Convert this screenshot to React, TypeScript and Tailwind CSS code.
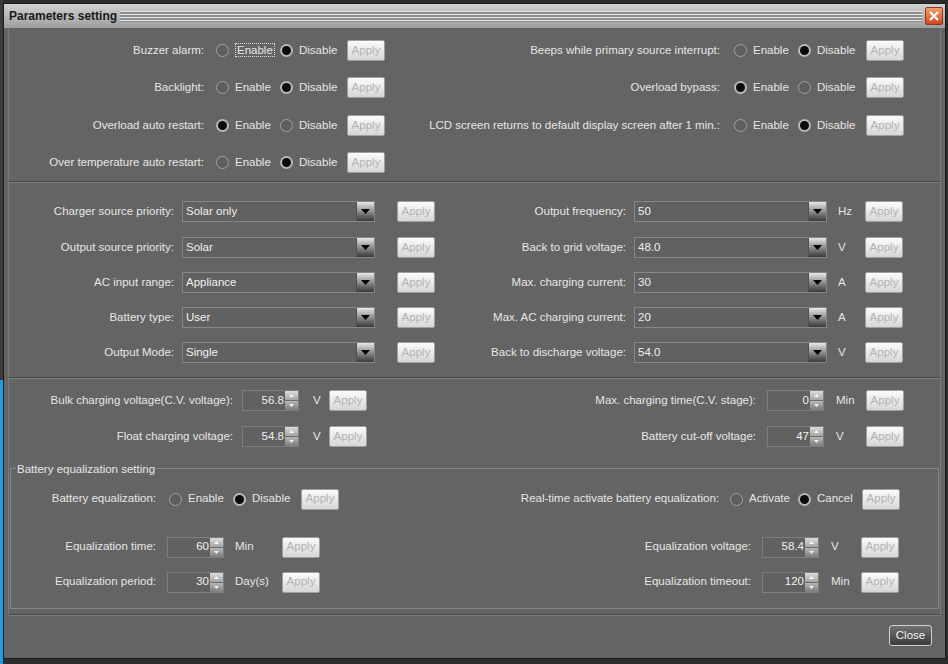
import React from "react";

const font = { fontFamily: '"Liberation Sans", Arial, sans-serif' };

// small widgets that mimic the Swing dark look
const Radio = ({ on }: { on?: boolean }) => (
  <span
    className={`flex h-[13px] w-[13px] shrink-0 items-center justify-center rounded-full ${
      on ? "bg-[#b8b8b8]" : "border border-[#a2a2a2] bg-[#5e5e5e]"
    }`}
  >
    {on && <span className="h-[9px] w-[9px] rounded-full bg-[#0a0a0a]" />}
  </span>
);

const Apply = ({ ml = "" }: { ml?: string }) => (
  <span
    className={`flex h-[21px] w-[38px] shrink-0 items-center justify-center rounded-[2px] border border-[#a0a0a0] bg-gradient-to-b from-[#fbfbfb] to-[#d6d6d6] text-[11.5px] text-[#b3b3b3] ${ml}`}
  >
    Apply
  </span>
);

const Select = ({ value }: { value: string }) => (
  <div className="flex h-[21px] w-[193px] shrink-0 items-center border border-[#878787] bg-[#616161]">
    <span className="flex-1 pl-[3px] text-[#f0f0f0]">{value}</span>
    <span className="flex h-full w-[18px] items-center justify-center border-l border-[#505050] bg-gradient-to-b from-[#e8e8e8] via-[#8e8e8e] to-[#3a3a3a]">
      <svg width="9" height="5" viewBox="0 0 9 5">
        <path d="M0 0h9L4.5 5z" fill="#050505" />
      </svg>
    </span>
  </div>
);

const Spinner = ({ value }: { value: string }) => (
  <div className="flex h-[21px] w-[57px] shrink-0 border border-[#7e7e7e] bg-[#616161]">
    <span className="flex flex-1 items-center justify-end pr-[1px] text-[#f0f0f0]">{value}</span>
    <span className="flex w-[13px] flex-col">
      <span className="flex flex-1 items-center justify-center bg-gradient-to-b from-[#dcdcdc] to-[#a4a4a4]">
        <svg width="5" height="3" viewBox="0 0 5 3">
          <path d="M0 3h5L2.5 0z" fill="#f6f6f6" />
        </svg>
      </span>
      <span className="flex flex-1 items-center justify-center border-t border-[#6c6c6c] bg-gradient-to-b from-[#b8b8b8] to-[#7c7c7c]">
        <svg width="5" height="3" viewBox="0 0 5 3">
          <path d="M0 0h5L2.5 3z" fill="#f0f0f0" />
        </svg>
      </span>
    </span>
  </div>
);

// radio pair: Enable / Disable
const Pair = ({
  on,
  a = "Enable",
  b = "Disable",
  first = "ml-[12px]",
  aw = "w-[37px]",
  bw = "w-[41px]",
  gap = "ml-[8px]",
  applyMl = "ml-[7px]",
  focus,
}: {
  on: 0 | 1;
  a?: string;
  b?: string;
  first?: string;
  aw?: string;
  bw?: string;
  gap?: string;
  applyMl?: string;
  focus?: boolean;
}) => (
  <>
    <span className={first}>
      <Radio on={on === 0} />
    </span>
    <span className={`ml-[6px] ${aw} shrink-0`}>
      <span className={focus ? "border border-dotted border-[#e0e0e0] px-[1px]" : ""}>{a}</span>
    </span>
    <span className={gap}>
      <Radio on={on === 1} />
    </span>
    <span className={`ml-[6px] ${bw} shrink-0`}>{b}</span>
    <Apply ml={applyMl} />
  </>
);

const Etched = "border-b border-b-[#4a4a4a] shadow-[0_1px_0_#7c7c7c]";

export default function App() {
  return (
    <div className="flex h-[664px] w-[948px] overflow-hidden bg-[#2c2c2c] text-[11.5px] text-[#e6e6e6]" style={font}>
      {/* bits of the application behind the dialog */}
      <div className="flex w-[3px] flex-col">
        <div className="h-[380px] bg-[#3c3c3c]" />
        <div className="flex-1 bg-[#1c9de4]" />
      </div>

      <div className="mt-[3px] flex h-[656px] w-[943px] flex-col border border-[#1a1a1a] bg-[#646464]">
        {/* Title bar */}
        <div className="flex h-[24px] items-center bg-gradient-to-b from-[#d2d2d2] to-[#9e9e9e] pl-[5px] pr-[2px]">
          <span className="text-[12px] font-bold text-[#1a1a1a]">Parameters setting</span>
          <div className="ml-[3px] h-[11px] flex-1 bg-[repeating-linear-gradient(to_bottom,#e6e6e6_0px,#e6e6e6_1px,#8e8e8e_1px,#8e8e8e_3px)]" />
          <span className="ml-[3px] flex h-[18px] w-[18px] items-center justify-center rounded-[2px] border border-[#8a3a20] bg-gradient-to-b from-[#f49a6a] to-[#d4451c]">
            <svg width="10" height="10" viewBox="0 0 10 10">
              <path d="M1 1l8 8M9 1l-8 8" stroke="#fff" strokeWidth="2.2" />
            </svg>
          </span>
        </div>

        <div className="flex flex-1 flex-col px-[4px]">
          {/* Section 1: switches */}
          <div className={`border-x border-[#7a7a7a] pt-[4px] ${Etched}`}>
            <div className="flex h-[37.33px] items-center">
              <span className="w-[195px] shrink-0 text-right">Buzzer alarm:</span>
              <Pair on={1} focus />
              <span className="w-[335px] shrink-0 text-right">Beeps while primary source interrupt:</span>
              <Pair on={1} first="ml-[14px]" applyMl="ml-[8px]" />
            </div>
            <div className="flex h-[37.33px] items-center">
              <span className="w-[195px] shrink-0 text-right">Backlight:</span>
              <Pair on={1} />
              <span className="w-[335px] shrink-0 text-right">Overload bypass:</span>
              <Pair on={0} first="ml-[14px]" applyMl="ml-[8px]" />
            </div>
            <div className="flex h-[37.33px] items-center">
              <span className="w-[195px] shrink-0 text-right">Overload auto restart:</span>
              <Pair on={0} />
              <span className="w-[335px] shrink-0 text-right">LCD screen returns to default display screen after 1 min.:</span>
              <Pair on={1} first="ml-[14px]" applyMl="ml-[8px]" />
            </div>
            <div className="flex h-[37.33px] items-center">
              <span className="w-[195px] shrink-0 text-right">Over temperature auto restart:</span>
              <Pair on={1} />
            </div>
          </div>

          {/* Section 2: selects */}
          <div className={`mt-[1px] border-x border-[#7a7a7a] pb-[6px] pt-[11px] ${Etched}`}>
            {[
              ["Charger source priority:", "Solar only", "Output frequency:", "50", "Hz"],
              ["Output source priority:", "Solar", "Back to grid voltage:", "48.0", "V"],
              ["AC input range:", "Appliance", "Max. charging current:", "30", "A"],
              ["Battery type:", "User", "Max. AC charging current:", "20", "A"],
              ["Output Mode:", "Single", "Back to discharge voltage:", "54.0", "V"],
            ].map(([l, lv, r, rv, u]) => (
              <div key={l} className="flex h-[35.25px] items-center">
                <span className="w-[165px] shrink-0 text-right">{l}</span>
                <span className="ml-[8px]">
                  <Select value={lv} />
                </span>
                <Apply ml="ml-[22px]" />
                <span className="w-[191px] shrink-0 text-right">{r}</span>
                <span className="ml-[8px]">
                  <Select value={rv} />
                </span>
                <span className="ml-[11px] w-[27px] shrink-0">{u}</span>
                <Apply />
              </div>
            ))}
          </div>

          {/* Section 3: voltages + equalization */}
          <div className={`mt-[1px] border-x border-[#7a7a7a] pb-[5px] pt-[4px] ${Etched}`}>
            <div className="flex h-[36px] items-center">
              <span className="w-[224px] shrink-0 text-right">Bulk charging voltage(C.V. voltage):</span>
              <span className="ml-[9px]">
                <Spinner value="56.8" />
              </span>
              <span className="ml-[14px] w-[16px] shrink-0">V</span>
              <Apply />
              <span className="w-[389px] shrink-0 text-right">Max. charging time(C.V. stage):</span>
              <span className="ml-[11px]">
                <Spinner value="0" />
              </span>
              <span className="ml-[12px] w-[30px] shrink-0">Min</span>
              <Apply />
            </div>
            <div className="flex h-[36px] items-center">
              <span className="w-[224px] shrink-0 text-right">Float charging voltage:</span>
              <span className="ml-[9px]">
                <Spinner value="54.8" />
              </span>
              <span className="ml-[14px] w-[16px] shrink-0">V</span>
              <Apply />
              <span className="w-[389px] shrink-0 text-right">Battery cut-off voltage:</span>
              <span className="ml-[11px]">
                <Spinner value="47" />
              </span>
              <span className="ml-[12px] w-[30px] shrink-0">V</span>
              <Apply />
            </div>

            <fieldset className="mx-[1px] mt-[7px] border border-[#858585] pb-[8px]">
              <legend className="ml-[5px] px-[1px] leading-[14px]">Battery equalization setting</legend>
              <div className="mt-[6px] flex h-[35px] items-center">
                <span className="w-[145px] shrink-0 text-right">Battery equalization:</span>
                <Pair on={1} first="ml-[13px]" applyMl="ml-[8px]" />
                <span className="w-[380px] shrink-0 text-right">Real-time activate battery equalization:</span>
                <Pair
                  on={1}
                  a="Activate"
                  b="Cancel"
                  aw="w-[43px]"
                  bw="w-[38px]"
                  first="ml-[11px]"
                  gap="ml-[6px]"
                  applyMl="ml-[7px]"
                />
              </div>
              <div className="mt-[13px] flex h-[35px] items-center">
                <span className="w-[145px] shrink-0 text-right">Equalization time:</span>
                <span className="ml-[11px]">
                  <Spinner value="60" />
                </span>
                <span className="ml-[11px] w-[47px] shrink-0">Min</span>
                <Apply />
                <span className="w-[431px] shrink-0 text-right">Equalization voltage:</span>
                <span className="ml-[11px]">
                  <Spinner value="58.4" />
                </span>
                <span className="ml-[12px] w-[30px] shrink-0">V</span>
                <Apply />
              </div>
              <div className="flex h-[35px] items-center">
                <span className="w-[145px] shrink-0 text-right">Equalization period:</span>
                <span className="ml-[11px]">
                  <Spinner value="30" />
                </span>
                <span className="ml-[11px] w-[47px] shrink-0">Day(s)</span>
                <Apply />
                <span className="w-[431px] shrink-0 text-right">Equalization timeout:</span>
                <span className="ml-[11px]">
                  <Spinner value="120" />
                </span>
                <span className="ml-[12px] w-[30px] shrink-0">Min</span>
                <Apply />
              </div>
            </fieldset>
          </div>

          {/* Footer */}
          <div className="flex flex-1 items-center justify-end pb-[2px] pr-[9px]">
            <span className="flex h-[21px] w-[43px] items-center justify-center rounded-[3px] border border-[#cfcfcf] bg-gradient-to-b from-[#727272] to-[#3c3c3c] text-[#f2f2f2]">
              Close
            </span>
          </div>
        </div>
      </div>
    </div>
  );
}
